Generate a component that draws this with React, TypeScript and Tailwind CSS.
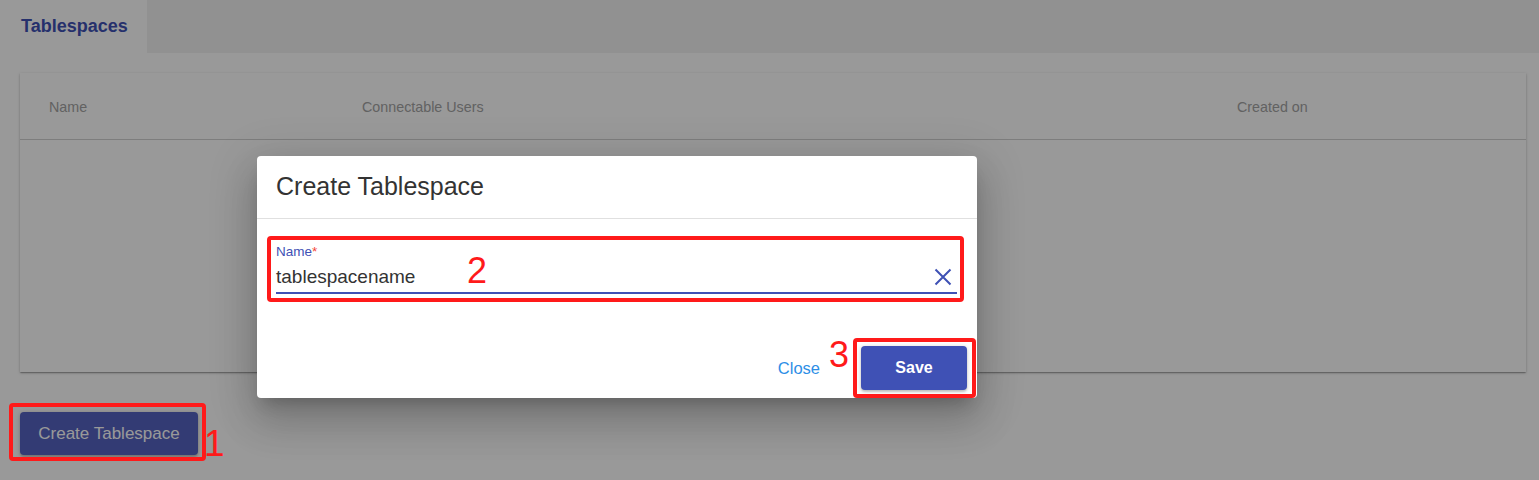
import React from "react";

export default function App() {
  return (
    <div className="relative w-[1539px] h-[480px] overflow-hidden bg-white font-['Liberation_Sans',Arial,sans-serif]">
      {/* Tab bar */}
      <div className="flex h-[53px] bg-[#f2f2f2]">
        <div className="w-[147px] bg-white flex items-center pl-[21px] text-[18px] font-bold text-[#3f51b5]">
          Tablespaces
        </div>
      </div>

      {/* Content */}
      <div className="pl-[20px] pr-[13px] pt-[20px]">
        <div className="h-[299px] bg-white shadow-[0_1px_3px_rgba(0,0,0,0.2),0_1px_1px_rgba(0,0,0,0.14),0_2px_1px_-1px_rgba(0,0,0,0.12)]">
          <div className="h-[67px] flex items-center pt-[3px] border-b border-[#d0d0d0] text-[14.3px] text-[#a3a3a3]">
            <div className="w-[342px] pl-[29px]">Name</div>
            <div className="w-[875px]">Connectable Users</div>
            <div>Created on</div>
          </div>
        </div>
        <div className="mt-[40px]">
          <button className="w-[178px] h-[43px] rounded-[4px] bg-[#5563c1] text-white text-[17px] shadow-[0_1px_5px_rgba(0,0,0,0.2),0_2px_2px_rgba(0,0,0,0.14)]">
            Create Tablespace
          </button>
        </div>
      </div>

      {/* Overlay */}
      <div className="absolute inset-0 bg-black/40" />

      {/* Modal */}
      <div className="absolute left-[257px] top-[156px] w-[720px] h-[242px] bg-white rounded-[4px] flex flex-col shadow-[0_11px_15px_-7px_rgba(0,0,0,0.2),0_24px_38px_3px_rgba(0,0,0,0.14),0_9px_46px_8px_rgba(0,0,0,0.12)]">
        <div className="h-[63px] flex items-center px-[19px] border-b border-[#e0e0e0] text-[25px] text-[#333333]">
          Create Tablespace
        </div>
        <div className="pl-[19px] pr-[20px] pt-[24px]">
          <div className="text-[13.5px] leading-[17px] text-[#3f51b5]">
            Name<span className="text-[#f44336]">*</span>
          </div>
          <div className="h-[34px] flex items-center justify-between border-b-2 border-[#3f51b5]">
            <span className="text-[19px] text-[#333333] pt-[2px]">tablespacename</span>
            <svg width="18" height="18" viewBox="0 0 18 18" className="mr-[5px] mt-[1px]">
              <path d="M1.5 1.5L16.5 16.5M16.5 1.5L1.5 16.5" stroke="#3f51b5" strokeWidth="2" fill="none" />
            </svg>
          </div>
        </div>
        <div className="mt-auto flex items-center justify-end gap-[41px] pr-[10px] pb-[8px]">
          <span className="text-[16.5px] text-[#2d8ee6]">Close</span>
          <button className="w-[106px] h-[44px] rounded-[4px] bg-[#3f51b5] text-white text-[16px] font-bold shadow-[0_1px_5px_rgba(0,0,0,0.2),0_2px_2px_rgba(0,0,0,0.14)]">
            Save
          </button>
        </div>
      </div>

      {/* Annotations */}
      <div className="absolute left-[9px] top-[403px] w-[197px] h-[58px] border-[4px] border-[#ff1a1a] rounded-[4px]" />
      <div className="absolute left-[204px] top-[425px] text-[37px] leading-none text-[#ff1a1a]">1</div>

      <div className="absolute left-[267px] top-[236px] w-[697px] h-[66px] border-[4px] border-[#ff1a1a] rounded-[4px]" />
      <div className="absolute left-[467px] top-[253px] text-[36px] leading-none text-[#ff1a1a]">2</div>

      <div className="absolute left-[853px] top-[338px] w-[123px] h-[60px] border-[4px] border-[#ff1a1a] rounded-[4px]" />
      <div className="absolute left-[829px] top-[337px] text-[36px] leading-none text-[#ff1a1a]">3</div>
    </div>
  );
}
